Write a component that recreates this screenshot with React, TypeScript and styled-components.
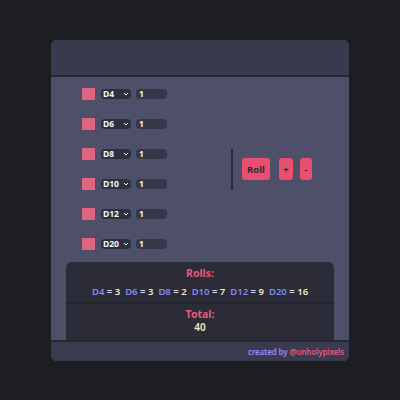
import React from "react";
import styled, { createGlobalStyle } from "styled-components";

const Global = createGlobalStyle`
  html, body { margin: 0; padding: 0; background: #1c1e21; }
  body { font-family: "Noto Sans", "Open Sans", sans-serif; }
`;

const Page = styled.div`
  width: 400px;
  height: 400px;
  padding-top: 40px;
  box-sizing: border-box;
  display: flex;
  justify-content: center;
`;

const Card = styled.div`
  width: 298px;
  height: 321px;
  border-radius: 6px;
  overflow: hidden;
  background: #4e4f68;
  display: flex;
  flex-direction: column;
`;

const Header = styled.div`
  height: 35px;
  background: #393a4d;
  border-bottom: 2px solid #262733;
  flex: none;
`;

const Main = styled.div`
  flex: 1;
  display: flex;
  flex-direction: column;
  padding-top: 11px;
`;

const Top = styled.div`
  display: flex;
  align-items: center;
  padding-left: 31px;
`;

const Rows = styled.div`
  display: flex;
  flex-direction: column;
  gap: 18px;
`;

const Row = styled.div`
  display: flex;
  align-items: center;
  height: 12px;
`;

const Box = styled.span`
  width: 13px;
  height: 12px;
  background: #e0667f;
  margin-right: 6px;
  flex: none;
`;

const SelectWrap = styled.div`
  position: relative;
  width: 30px;
  height: 10px;
  margin-right: 5px;
  flex: none;
`;

const Select = styled.select`
  appearance: none;
  -webkit-appearance: none;
  display: block;
  box-sizing: border-box;
  border: none;
  outline: none;
  width: 100%;
  height: 10px;
  border-radius: 4px;
  background: #2e2f3f;
  color: #f4f4f4;
  font-family: "Noto Sans", sans-serif;
  font-weight: 700;
  font-size: 8.5px;
  line-height: 10px;
  padding: 0 0 0 2px;
  margin: 0;
`;

const Chevron = styled.svg`
  position: absolute;
  right: 2px;
  top: 2px;
  width: 6px;
  height: 6px;
  pointer-events: none;
`;

const Count = styled.input`
  display: block;
  border: none;
  outline: none;
  width: 31px;
  height: 10px;
  border-radius: 4px;
  background: #363748;
  color: #f4f4f4;
  font-family: "Noto Sans", sans-serif;
  font-weight: 700;
  font-size: 8.5px;
  line-height: 10px;
  padding: 0 0 0 3px;
  box-sizing: border-box;
  margin: 0;
`;

const Controls = styled.div`
  display: flex;
  align-items: center;
  margin-left: 64px;
`;

const VLine = styled.div`
  width: 2px;
  height: 41px;
  background: #2a2b39;
  margin-right: 9px;
`;

const Btn = styled.button<{ $w: number; $mr?: number }>`
  width: ${(p) => p.$w}px;
  height: 22px;
  margin-right: ${(p) => p.$mr ?? 0}px;
  border: none;
  border-radius: 3px;
  background: #e9506f;
  color: #2b2c3a;
  font-family: "Noto Sans", sans-serif;
  font-weight: 700;
  font-size: 9.5px;
  padding: 0;
  display: flex;
  align-items: center;
  justify-content: center;
`;

const Panel = styled.div`
  margin: 12px 15px 0 15px;
  flex: 1;
  background: #2c2c39;
  border-radius: 6px 6px 0 0;
  display: flex;
  flex-direction: column;
`;

const Section = styled.div<{ $h: number }>`
  height: ${(p) => p.$h}px;
  display: flex;
  flex-direction: column;
  align-items: center;
  justify-content: center;
`;

const Divider = styled.div`
  height: 2px;
  background: #24242f;
`;

const Title = styled.div`
  color: #e9587a;
  font-weight: 700;
  font-size: 10.5px;
  line-height: 13px;
`;

const Values = styled.div`
  display: flex;
  gap: 5px;
  margin-top: 5px;
  font-size: 9.5px;
  font-weight: 600;
  line-height: 13px;
`;

const Item = styled.span``;
const Label = styled.span`
  color: #7f8bef;
`;
const Eq = styled.span`
  color: #d8d8e8;
`;
const Val = styled.span`
  color: #f3e7c4;
`;

const TotalVal = styled.div`
  color: #f3e7c4;
  font-size: 10px;
  font-weight: 600;
  line-height: 12px;
`;

const Footer = styled.div`
  height: 21px;
  flex: none;
  background: #3a3b4e;
  border-top: 2px solid #262733;
  box-sizing: border-box;
  display: flex;
  align-items: center;
  justify-content: flex-end;
  padding-right: 5px;
  font-size: 8px;
  font-weight: 600;
  letter-spacing: -0.15px;
`;

const By = styled.span`
  color: #9b8af0;
`;
const Handle = styled.span`
  color: #e6557c;
`;

const dice = ["D4", "D6", "D8", "D10", "D12", "D20"];
const rolls: [string, number][] = [
  ["D4", 3],
  ["D6", 3],
  ["D8", 2],
  ["D10", 7],
  ["D12", 9],
  ["D20", 16],
];

export default function App() {
  return (
    <>
      <Global />
      <Page>
        <Card>
          <Header />
          <Main>
            <Top>
              <Rows>
                {dice.map((d) => (
                  <Row key={d}>
                    <Box />
                    <SelectWrap>
                      <Select defaultValue={d}>
                        {dice.map((o) => (
                          <option key={o} value={o}>
                            {o}
                          </option>
                        ))}
                      </Select>
                      <Chevron viewBox="0 0 24 24" fill="none" stroke="#f4f4f4" strokeWidth="4" strokeLinecap="round" strokeLinejoin="round">
                        <path d="M5 9l7 7 7-7" />
                      </Chevron>
                    </SelectWrap>
                    <Count defaultValue="1" />
                  </Row>
                ))}
              </Rows>
              <Controls>
                <VLine />
                <Btn $w={28} $mr={9}>Roll</Btn>
                <Btn $w={14} $mr={7}>+</Btn>
                <Btn $w={12}>-</Btn>
              </Controls>
            </Top>
            <Panel>
              <Section $h={40}>
                <Title>Rolls:</Title>
                <Values>
                  {rolls.map(([l, v]) => (
                    <Item key={l}>
                      <Label>{l}</Label> <Eq>=</Eq> <Val>{v}</Val>
                    </Item>
                  ))}
                </Values>
              </Section>
              <Divider />
              <Section $h={33}>
                <Title>Total:</Title>
                <TotalVal>40</TotalVal>
              </Section>
            </Panel>
          </Main>
          <Footer>
            <By>created by&nbsp;</By>
            <Handle>@unholypixels</Handle>
          </Footer>
        </Card>
      </Page>
    </>
  );
}
